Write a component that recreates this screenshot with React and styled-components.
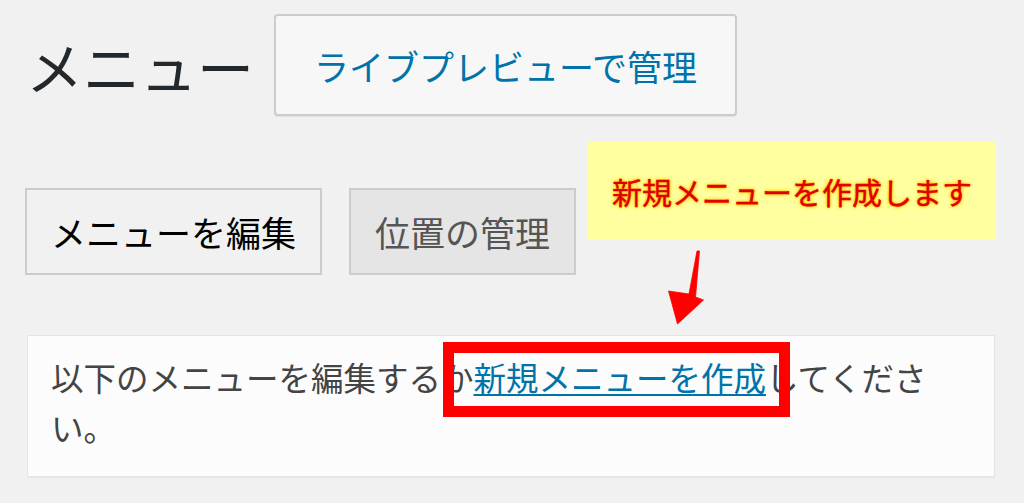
import React from 'react';
import styled, {createGlobalStyle} from 'styled-components';

const GlobalStyle = createGlobalStyle`
  html, body {
    margin: 0;
    padding: 0;
    background: #f1f1f1;
  }
  body {
    font-family: "Noto Sans CJK JP", "Noto Sans", sans-serif;
  }
`

const Page = styled.div`
  position: relative;
  box-sizing: border-box;
  width: 1024px;
  height: 503px;
  padding: 14px 29px 0 25px;
  overflow: hidden;
`

const Header = styled.div`
  display: flex;
  align-items: center;
  gap: 20px;
`

const Title = styled.h1`
  margin: 0 0 0 1px;
  font-size: 57px;
  line-height: 1;
  font-weight: 400;
  color: #23282d;
`

const LiveButton = styled.a`
  box-sizing: border-box;
  display: flex;
  align-items: center;
  justify-content: center;
  height: 102px;
  padding: 0 38px;
  border: 2px solid #cccccc;
  border-radius: 4px;
  background: #f7f7f7;
  color: #0073aa;
  font-size: 35px;
  line-height: 1;
  text-decoration: none;
  box-shadow: 0 1px 0 #e0e0e0;
`

const Tabs = styled.nav`
  display: flex;
  gap: 27px;
  margin-top: 72px;
`

const Tab = styled.a`
  box-sizing: border-box;
  display: flex;
  align-items: center;
  justify-content: center;
  height: 87px;
  padding: 0 24px;
  border: 2px solid #cccccc;
  background: ${p => p.active ? '#f1f1f1' : '#e5e5e5'};
  color: ${p => p.active ? '#000000' : '#555555'};
  font-size: 35px;
  line-height: 1;
  text-decoration: none;
`

const Panel = styled.div`
  position: relative;
  box-sizing: border-box;
  width: 968px;
  height: 142px;
  margin: 60px 0 0 2px;
  padding: 16px 23px 0;
  border: 1px solid #e5e5e5;
  background: #fcfcfc;
  box-shadow: 0 1px 1px rgba(0, 0, 0, 0.04);
  color: #444444;
  font-size: 32.5px;
  line-height: 50px;
`

const Link = styled.a`
  color: #0073aa;
  text-decoration: underline;
  text-decoration-thickness: 2px;
  text-underline-offset: 3px;
`

// annotation: red box drawn over the link
const RedFrame = styled.div`
  position: absolute;
  left: 415px;
  top: 6px;
  width: 347px;
  height: 75px;
  box-sizing: border-box;
  border: 11px solid #ff0000;
  pointer-events: none;
`

const Callout = styled.div`
  position: absolute;
  left: 588px;
  top: 142px;
  width: 408px;
  height: 98px;
  display: flex;
  align-items: center;
  justify-content: center;
  background: #ffffa0;
  color: #e00000;
  font-size: 30px;
  font-weight: 400;
  line-height: 1;
  -webkit-text-stroke: 0.3px #e00000;
  text-shadow: 0 0 1px #ff9a00, 0 0 3px #ffb800, 0 0 5px #ffd800;
`

const Arrow = styled.svg`
  position: absolute;
  left: 660px;
  top: 245px;
  width: 50px;
  height: 85px;
`

export default function App() {
    return (
        <Page>
            <GlobalStyle/>
            <Header>
                <Title>メニュー</Title>
                <LiveButton href="#">ライブプレビューで管理</LiveButton>
            </Header>

            <Tabs>
                <Tab href="#" active>メニューを編集</Tab>
                <Tab href="#">位置の管理</Tab>
            </Tabs>

            <Panel>
                以下のメニューを編集するか<Link href="#">新規メニューを作成</Link>してください。
                <RedFrame/>
            </Panel>

            <Callout>新規メニューを作成します</Callout>
            <Arrow viewBox="0 0 50 85">
                <polygon
                    points="37,6 39.5,6 35.5,52 43.5,55 17.5,79 8.5,46 29,49"
                    fill="#ff0000"
                    stroke="#ff0000"
                    strokeWidth="0.8"
                    strokeLinejoin="round"
                />
            </Arrow>
        </Page>
    );
}
